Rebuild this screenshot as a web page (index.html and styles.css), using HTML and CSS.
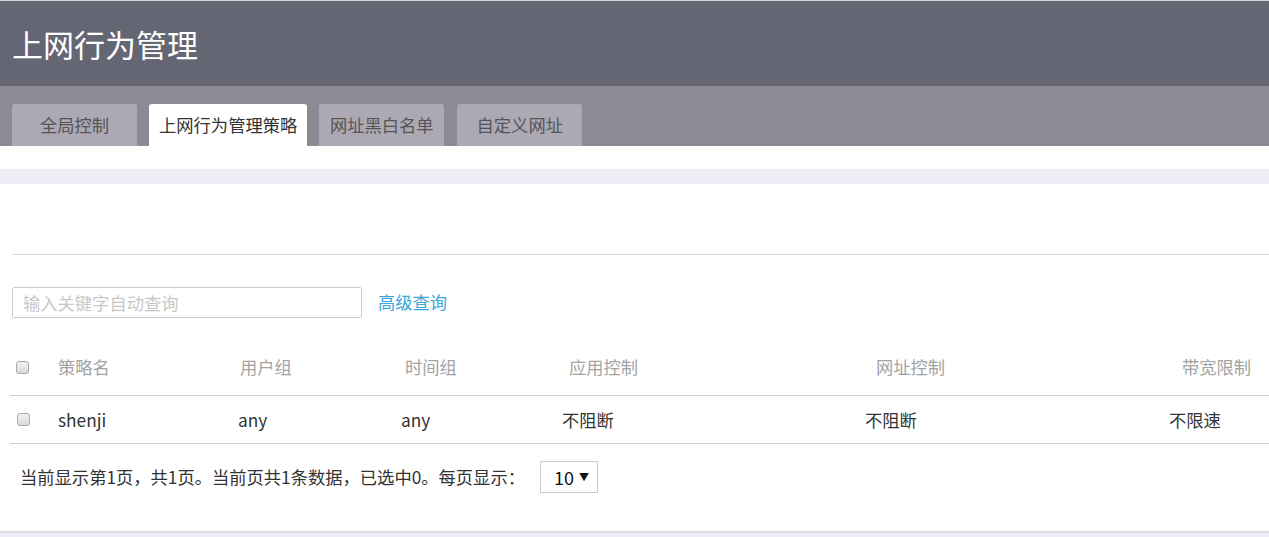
FILE: index.html
```html
<!DOCTYPE html>
<html>
  <head>
    <title>上网行为管理</title>
    <meta charset="utf-8">
    <link rel="stylesheet" href="styles.css">
  </head>
  <body>
    <div class="header">
      <h1>上网行为管理</h1>
    </div>
    <div class="tabbar">
      <div class="tab">全局控制</div>
      <div class="tab active">上网行为管理策略</div>
      <div class="tab">网址黑白名单</div>
      <div class="tab">自定义网址</div>
    </div>

    <div class="band"></div>

    <div class="content">
      <div class="divider"></div>

      <div class="search">
        <input type="text" class="input-box" placeholder="输入关键字自动查询">
        <a class="adv" href="#">高级查询</a>
      </div>

      <div class="table">
        <div class="row head">
          <div class="cell"><input type="checkbox" class="cb"></div>
          <div class="cell">策略名</div>
          <div class="cell o2">用户组</div>
          <div class="cell o4">时间组</div>
          <div class="cell o7">应用控制</div>
          <div class="cell o11">网址控制</div>
          <div class="cell o13">带宽限制</div>
        </div>
        <div class="row">
          <div class="cell"><input type="checkbox" class="cb"></div>
          <div class="cell">shenji</div>
          <div class="cell">any</div>
          <div class="cell">any</div>
          <div class="cell">不阻断</div>
          <div class="cell">不阻断</div>
          <div class="cell">不限速</div>
        </div>
      </div>

      <div class="pager">
        <span>当前显示第1页，共1页。当前页共1条数据，已选中0。每页显示：</span>
        <div class="page-size">10 <span class="arrow">▼</span></div>
      </div>
    </div>
    <div class="band bottom"></div>
  </body>
</html>
```

FILE: styles.css
```css
body { margin: 0; font-family: "Microsoft YaHei", "Noto Sans CJK SC", sans-serif; font-size: 17.3px; color: #333; background: #fff; }

.header { height: 85px; background-color: #656674; border-top: 1px solid #d6d6dc; display: flex; align-items: center; padding-left: 12px; }
.header h1 { margin: 0; font-size: 31px; font-weight: normal; color: #fff; line-height: 1; padding-bottom: 1px; }

.tabbar { height: 60px; background-color: #8d8a95; display: flex; align-items: flex-end; padding-left: 12px; gap: 12px; }
.tab { min-width: 125px; height: 42px; box-sizing: border-box; padding: 0 10px; background-color: #aca8b4; color: #555; border-radius: 3px 3px 0 0; display: flex; align-items: center; justify-content: center; line-height: 1; }
.tab.active { background-color: #fff; color: #333; }
.tab:last-child { margin-left: 1px; }

.band { height: 15px; background-color: #efeef7; margin-top: 23px; }
.band.bottom { margin-top: 0; height: 4px; border-top: 1px solid #dcdce2; }

.content { padding-top: 70px; padding-bottom: 38px; border-bottom: 1px solid #dcdce2; }
.divider { height: 1px; background-color: #d9d9d9; margin-left: 12px; }

.search { display: flex; align-items: center; padding: 32px 0 0 12px; height: 31px; }
.input-box { width: 350px; height: 31px; box-sizing: border-box; border: 1px solid #ccc; border-radius: 2px; padding: 0 10px; font-family: inherit; font-size: 17.3px; color: #333; outline: none; }
.input-box::placeholder { color: #c8c8c8; }
.adv { margin-left: 16px; color: #3aa7d9; text-decoration: none; line-height: 1; padding-bottom: 2px; }

.table { margin-top: 23px; margin-left: 10px; }
.row { display: grid; grid-template-columns: 48px 180px 163px 161px 303px 304px 1fr; height: 47px; align-items: center; border-bottom: 1px solid #cfcfcf; }
.row.head { height: 54px; color: #a3a3a3; }
.row.head .cell { padding-bottom: 2px; }
.cell { line-height: 1; white-space: nowrap; }
.o2 { padding-left: 2px; }
.o4 { padding-left: 4px; }
.o7 { padding-left: 7px; }
.o11 { padding-left: 11px; }
.o13 { padding-left: 13px; }

.cb { appearance: none; -webkit-appearance: none; width: 13px; height: 13px; margin: 0 0 0 7px; border: 1px solid #a9a9a9; border-radius: 3px; background: linear-gradient(#f2f2f2, #d9d9d9); display: block; }
.row.head .cb { margin-left: 6px; }

.pager { display: flex; align-items: center; padding: 17px 0 0 20px; height: 32px; line-height: 1; }
.page-size { margin-left: 15px; width: 58px; height: 32px; box-sizing: border-box; border: 1px solid #ccc; display: flex; align-items: center; padding-left: 13px; color: #111; font-size: 18px; }
.arrow { font-size: 10px; margin-left: 5px; }
```
